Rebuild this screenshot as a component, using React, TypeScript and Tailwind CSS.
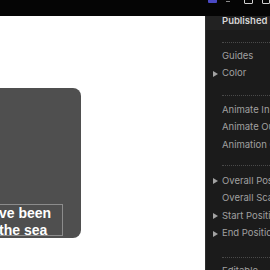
import React from "react";

type Row = { label: string; caret?: boolean };

function Sep({ h, top }: { h: number; top: number }) {
    return (
        <div style={{ height: h }} className="relative">
            <div
                style={{ top }}
                className="absolute left-[16px] right-0 border-t border-dotted border-[#4a4a4a]"
            />
        </div>
    );
}

function Item({ label, caret }: Row) {
    return (
        <div className="h-[17.5px] flex items-center whitespace-nowrap">
            <div className="w-[16px] shrink-0 flex justify-center pl-[3px]">
                {caret && (
                    <svg width="5" height="6" viewBox="0 0 5 6">
                        <path d="M0 0 L5 3 L0 6 Z" fill="#a3a3a3" />
                    </svg>
                )}
            </div>
            <span className="shrink-0 text-[9.5px] text-[#a0a0a0]">{label}</span>
        </div>
    );
}

export default function App() {
    return (
        <div
            className="w-[270px] h-[270px] overflow-hidden flex flex-col bg-black"
            style={{ fontFamily: "Inter, 'Open Sans', sans-serif" }}
        >
            {/* top bar */}
            <div className="h-[16px] shrink-0 bg-[#050505] flex items-start pl-[208px] overflow-hidden">
                <div className="w-[9px] h-[4px] -mt-[1px] bg-[#4a49c4] rounded-b-[1px]" />
                <div className="w-[4px] h-[1px] mt-[1px] ml-[9px] bg-[#8a8a8a]" />
                <div className="w-[10px] h-[5px] -mt-[1px] ml-[14px] border border-[#cfcfcf] rounded-[1px]" />
                <div className="w-[8px] h-[5px] -mt-[1px] ml-[9px] border border-[#cfcfcf] rounded-[1px]" />
            </div>

            <div className="flex flex-1 min-h-0">
                {/* canvas */}
                <div className="w-[205px] shrink-0 bg-white overflow-hidden">
                    <div className="mt-[72px] w-[81px] h-[150px] bg-[#4f4f4f] rounded-r-[8px] flex flex-col justify-end pr-[18px] pb-[2px]">
                        <div className="h-[32px] border-t border-r border-b border-[#8c8c8c] overflow-hidden">
                            <div
                                className="text-white font-bold text-[14px] leading-[17px] -ml-[1px] whitespace-nowrap"
                                style={{ fontFamily: "'Liberation Sans', Arial, sans-serif" }}
                            >
                                <div>ve been</div>
                                <div>the sea</div>
                            </div>
                        </div>
                    </div>
                </div>

                {/* dropdown panel */}
                <div className="flex-1 min-w-0 bg-[#1b1b1b] border-l border-[#2e2e2e] overflow-hidden">
                    <div className="h-[14px] bg-[#222222] pl-[16px] flex items-start whitespace-nowrap">
                        <span className="shrink-0 text-[9.5px] leading-[10px] font-semibold text-[#d6d6d6]">
                            Published Properties
                        </span>
                    </div>
                    <Sep h={17.25} top={12} />
                    <Item label="Guides" />
                    <Item label="Color" caret />
                    <Sep h={19} top={12.75} />
                    <Item label="Animate In" />
                    <Item label="Animate Out" />
                    <Item label="Animation Curve" />
                    <Sep h={18.5} top={11.25} />
                    <Item label="Overall Position" caret />
                    <Item label="Overall Scale" />
                    <Item label="Start Position" caret />
                    <Item label="End Position" caret />
                    <Sep h={19.75} top={14.75} />
                    <Item label="Editable" />
                </div>
            </div>
        </div>
    );
}
